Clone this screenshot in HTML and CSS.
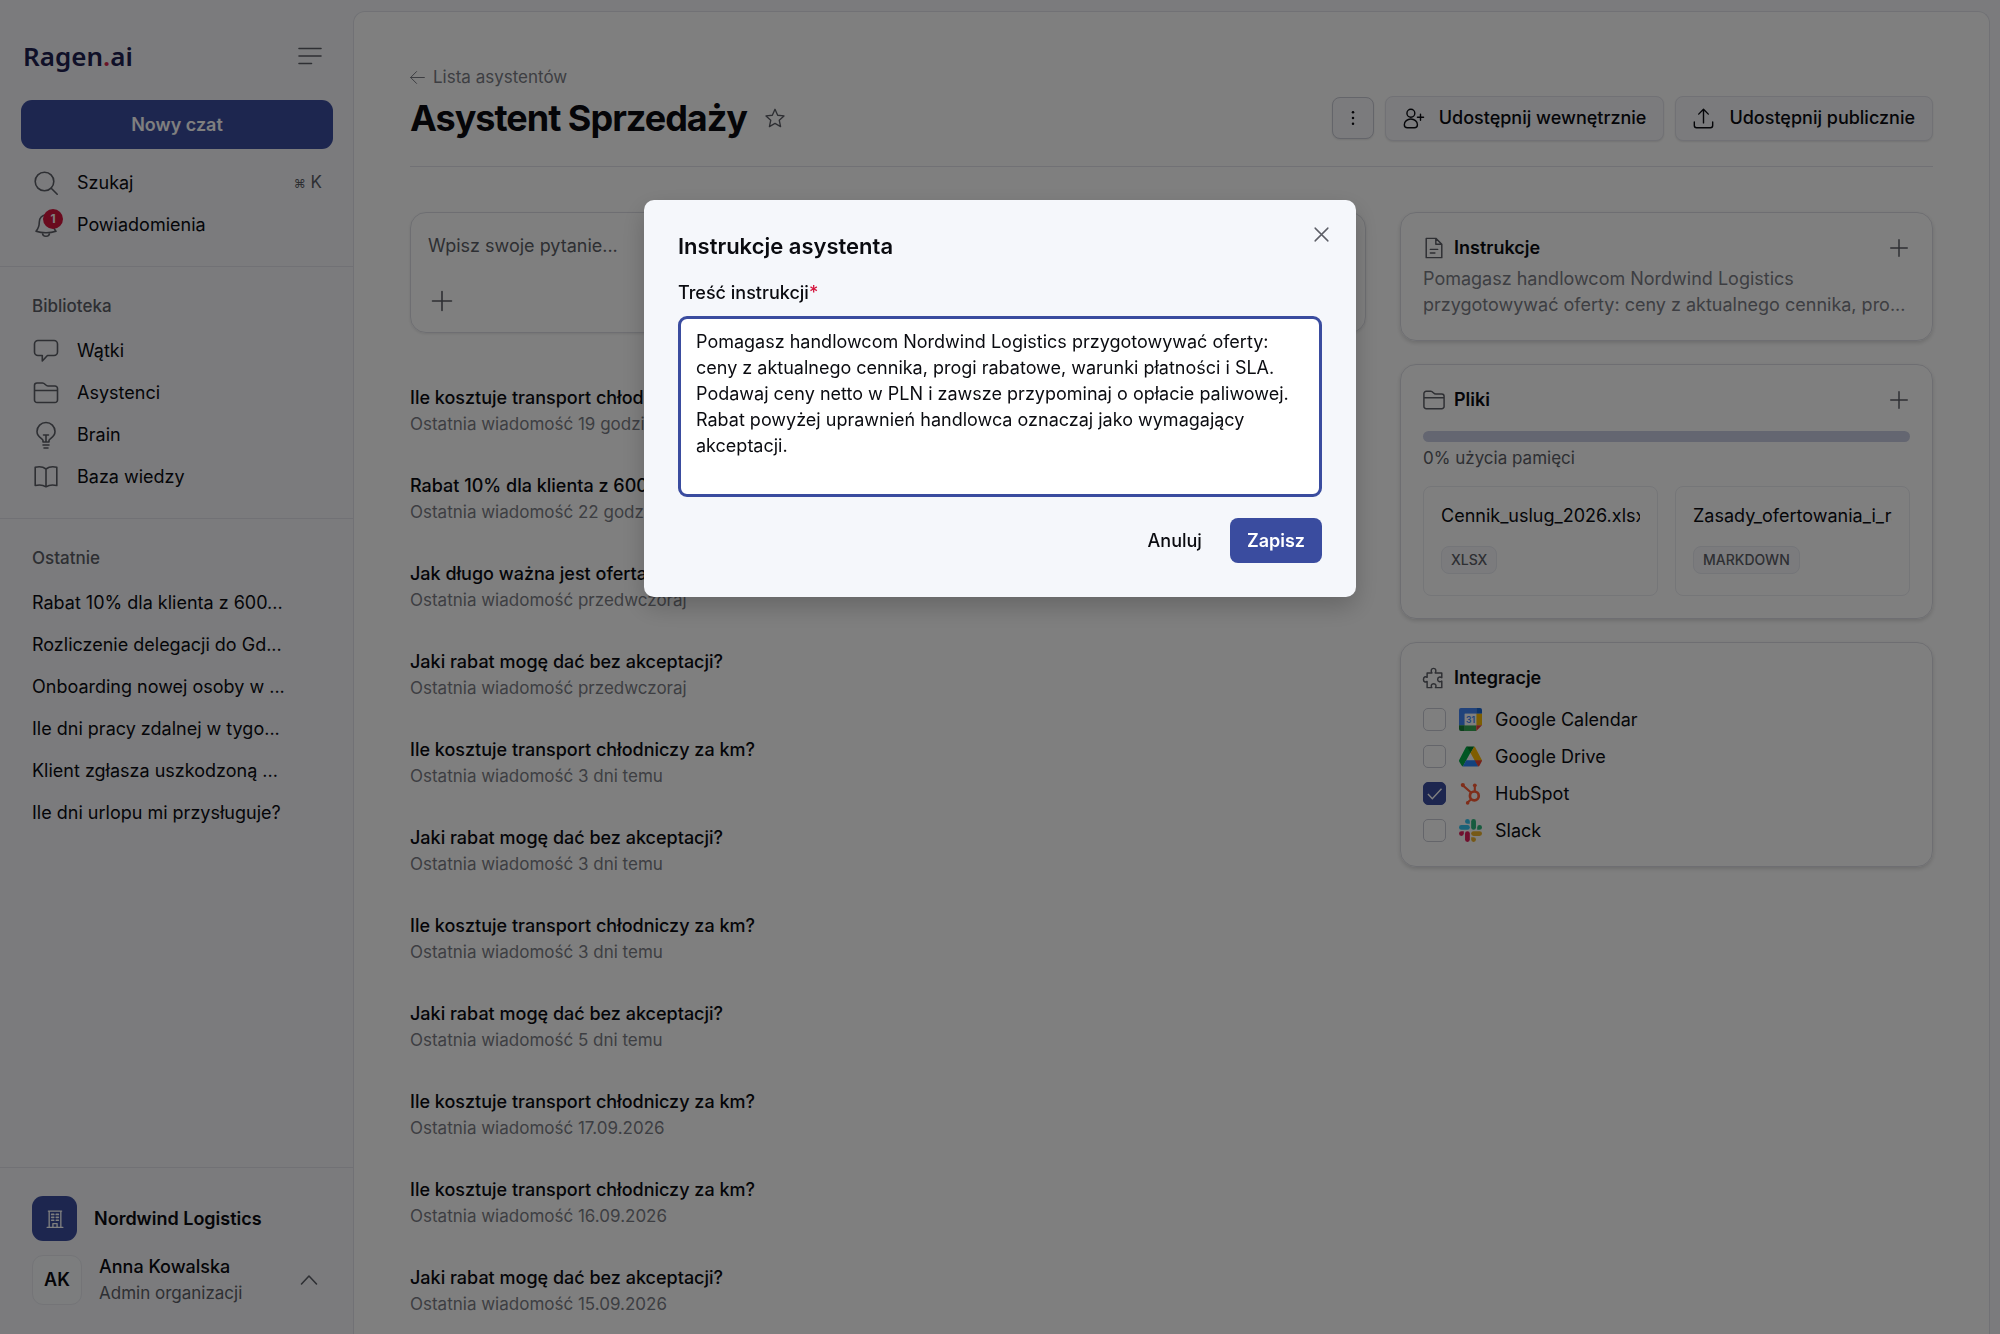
FILE: index.html
```html
<!DOCTYPE html>
<html lang="pl">
<head>
    <meta charset="UTF-8">
    <meta name="viewport" content="width=device-width, initial-scale=1.0">
    <title>Asystent Sprzedaży - Ragen.ai</title>
    <link rel="stylesheet" href="styles.css">
</head>
<body>
    <div class="app">
        <aside class="sidebar">
            <div class="sidebar-top">
                <a class="logo" href="#">Ragen<span>.</span>ai</a>
                <button class="icon-button" aria-label="Zwiń menu">
                    <svg class="icon" viewBox="0 0 24 24"><path d="M1 4.500h22M1 12h22M1 19.500h12.500"/></svg>
                </button>
            </div>
            <button class="new-chat">Nowy czat</button>
            <nav class="nav">
                <a href="#">
                    <svg class="icon" viewBox="0 0 24 24"><circle cx="10.500" cy="10.500" r="9.300"/><path d="M17.200 17.200l6 6"/></svg>
                    <span>Szukaj</span>
                    <kbd><small>⌘</small> K</kbd>
                </a>
                <a href="#">
                    <span class="bell">
                        <svg class="icon" viewBox="0 0 24 24"><path d="M12 2C8 2 5.300 5 5.300 9c0 5-1.300 7-3.300 9.200 3 1 6.500 1.500 10 1.500s7-.5 10-1.500c-2-2.200-3.300-4.200-3.300-9.200 0-4-2.700-7-6.700-7zM8.500 19.700c0 2.200 1.500 3.600 3.500 3.600s3.500-1.400 3.500-3.600"/></svg>
                        <span class="count">1</span>
                    </span>
                    <span>Powiadomienia</span>
                </a>
            </nav>

            <section class="group">
                <h2>Biblioteka</h2>
                <nav class="nav">
                    <a href="#">
                        <svg class="icon" viewBox="0 0 24 24"><path d="M4 1.500h16a3.500 3.500 0 0 1 3.500 3.500v8a3.500 3.500 0 0 1-3.500 3.500h-6.500C11.500 18.500 10 20.500 8.300 22v-5.500H4A3.500 3.500 0 0 1 .5 13V5A3.500 3.500 0 0 1 4 1.500z"/></svg>
                        <span>Wątki</span>
                    </a>
                    <a href="#">
                        <svg class="icon" viewBox="0 0 24 24"><path d="M.5 19V4.500a2.500 2.500 0 0 1 2.500-2.500h5.500c2.500 0 3 3 5.500 3h7a2.500 2.500 0 0 1 2.500 2.500V19a2.500 2.500 0 0 1-2.500 2.500H3A2.500 2.500 0 0 1 .5 19zM.5 9.500h23"/></svg>
                        <span>Asystenci</span>
                    </a>
                    <a href="#">
                        <svg class="icon" viewBox="0 0 24 24"><path d="M9 19v-1.500C9 15.500 3 14.500 3 8.500a9 9 0 0 1 18 0c0 6-6 7-6 9V19M9 22h6M10 25h4M12 19v-7M9.500 12h5M9 19h6"/></svg>
                        <span>Brain</span>
                    </a>
                    <a href="#">
                        <svg class="icon" viewBox="0 0 24 24"><path d="M12 4C9 1.700 5 1.300 1.200 2.300V20.500c4-1 7.800-.7 10.800 1.300 3-2 6.800-2.300 10.800-1.300V2.300C19 1.300 15 1.700 12 4zM12 4v17.500"/></svg>
                        <span>Baza wiedzy</span>
                    </a>
                </nav>
            </section>

            <section class="group recent">
                <h2>Ostatnie</h2>
                <nav class="nav">
                    <a href="#">Rabat 10% dla klienta z 600...</a>
                    <a href="#">Rozliczenie delegacji do Gd...</a>
                    <a href="#">Onboarding nowej osoby w ...</a>
                    <a href="#">Ile dni pracy zdalnej w tygo...</a>
                    <a href="#">Klient zgłasza uszkodzoną ...</a>
                    <a href="#">Ile dni urlopu mi przysługuje?</a>
                </nav>
            </section>

            <div class="account">
                <div class="org">
                    <span class="org-icon">
                        <svg class="icon" viewBox="0 0 24 24"><path d="M4 2.500h16M2.500 22h19M5 2.500V22M19 2.500V22M9.500 22v-4.500h5V22"/><path d="M8 6.500h2.500M13.500 6.500H16M8 10h2.500M13.500 10H16M8 13.500h2.500M13.500 13.500H16" stroke-width="2"/></svg>
                    </span>
                    <strong>Nordwind Logistics</strong>
                </div>
                <button class="user">
                    <span class="avatar">AK</span>
                    <span class="user-name">
                        <b>Anna Kowalska</b>
                        <span>Admin organizacji</span>
                    </span>
                    <svg class="icon" viewBox="0 0 24 24"><path d="M4.500 16l7.500-8 7.500 8"/></svg>
                </button>
            </div>
        </aside>

        <main class="main">
            <a class="back" href="#">
                <svg class="icon" viewBox="0 0 24 24"><path d="M1 12h22M10.500 2.500L1 12l9.500 9.500"/></svg>
                Lista asystentów
            </a>
            <header class="page-header">
                <h1>Asystent Sprzedaży</h1>
                <button class="icon-button star" aria-label="Dodaj do ulubionych">
                    <svg class="icon" viewBox="0 0 24 24"><path d="M12 1.500l3.200 7.200 7.600.8-5.700 5.200 1.600 7.600L12 18.500l-6.700 3.800 1.600-7.600L1.200 9.500l7.600-.8z"/></svg>
                </button>
                <div class="actions">
                    <button class="button more" aria-label="Więcej">
                        <svg class="icon dots" viewBox="0 0 24 24"><circle cx="12" cy="5" r="1.500"/><circle cx="12" cy="12" r="1.500"/><circle cx="12" cy="19" r="1.500"/></svg>
                    </button>
                    <button class="button">
                        <svg class="icon" viewBox="0 0 24 24"><circle cx="9" cy="6" r="4.500"/><path d="M9 12.500c-4 0-7.500 3-7.500 6.500 0 2 1.500 3.500 3.500 3.500h8c2 0 3.500-1.500 3.500-3.500 0-3.500-3.500-6.500-7.500-6.500zM20 7v7M16.500 10.500h7"/></svg>
                        Udostępnij wewnętrznie
                    </button>
                    <button class="button">
                        <svg class="icon" viewBox="0 0 24 24"><path d="M12 17V1.500M6.500 7L12 1.500 17.500 7M1.500 16v4a2.500 2.500 0 0 0 2.500 2.500h16a2.500 2.500 0 0 0 2.500-2.500v-4"/></svg>
                        Udostępnij publicznie
                    </button>
                </div>
            </header>

            <div class="columns">
                <div class="threads-column">
                    <div class="composer">
                        <input type="text" placeholder="Wpisz swoje pytanie..." aria-label="Pytanie">
                        <button class="icon-button" aria-label="Dodaj plik">
                            <svg class="icon" viewBox="0 0 24 24"><path d="M12 2.500v19M2.500 12h19"/></svg>
                        </button>
                    </div>
                    <ul class="threads">
                        <li><a href="#">Ile kosztuje transport chłodniczy za km?</a><span>Ostatnia wiadomość 19 godzin temu</span></li>
                        <li><a href="#">Rabat 10% dla klienta z 600 paletami</a><span>Ostatnia wiadomość 22 godziny temu</span></li>
                        <li><a href="#">Jak długo ważna jest oferta?</a><span>Ostatnia wiadomość przedwczoraj</span></li>
                        <li><a href="#">Jaki rabat mogę dać bez akceptacji?</a><span>Ostatnia wiadomość przedwczoraj</span></li>
                        <li><a href="#">Ile kosztuje transport chłodniczy za km?</a><span>Ostatnia wiadomość 3 dni temu</span></li>
                        <li><a href="#">Jaki rabat mogę dać bez akceptacji?</a><span>Ostatnia wiadomość 3 dni temu</span></li>
                        <li><a href="#">Ile kosztuje transport chłodniczy za km?</a><span>Ostatnia wiadomość 3 dni temu</span></li>
                        <li><a href="#">Jaki rabat mogę dać bez akceptacji?</a><span>Ostatnia wiadomość 5 dni temu</span></li>
                        <li><a href="#">Ile kosztuje transport chłodniczy za km?</a><span>Ostatnia wiadomość 17.09.2026</span></li>
                        <li><a href="#">Ile kosztuje transport chłodniczy za km?</a><span>Ostatnia wiadomość 16.09.2026</span></li>
                        <li><a href="#">Jaki rabat mogę dać bez akceptacji?</a><span>Ostatnia wiadomość 15.09.2026</span></li>
                    </ul>
                </div>

                <div class="panels">
                    <section class="card">
                        <div class="card-header">
                            <svg class="icon" viewBox="0 0 24 24"><path d="M3.500 1.500H14l6.500 6.500v14.500h-17zM14 1.500V8h6.500M8 13.500h8M8 17.500h5"/></svg>
                            <h3>Instrukcje</h3>
                            <button class="icon-button" aria-label="Edytuj instrukcje">
                                <svg class="icon" viewBox="0 0 24 24"><path d="M12 3v18M3 12h18"/></svg>
                            </button>
                        </div>
                        <p class="excerpt">Pomagasz handlowcom Nordwind Logistics przygotowywać oferty: ceny z aktualnego cennika, pro...</p>
                    </section>

                    <section class="card">
                        <div class="card-header">
                            <svg class="icon" viewBox="0 0 24 24"><path d="M1 19V5a2.500 2.500 0 0 1 2.500-2.500h5c2.500 0 3 3 5.500 3h6.500A2.500 2.500 0 0 1 23 8v11a2.500 2.500 0 0 1-2.500 2.500h-17A2.500 2.500 0 0 1 1 19zM1 9.500h22"/></svg>
                            <h3>Pliki</h3>
                            <button class="icon-button" aria-label="Dodaj plik">
                                <svg class="icon" viewBox="0 0 24 24"><path d="M12 3v18M3 12h18"/></svg>
                            </button>
                        </div>
                        <div class="usage-bar"></div>
                        <p class="usage">0% użycia pamięci</p>
                        <div class="files">
                            <div class="file">
                                <p>Cennik_uslug_2026.xlsx</p>
                                <span class="tag">XLSX</span>
                            </div>
                            <div class="file">
                                <p>Zasady_ofertowania_i_rabatow.md</p>
                                <span class="tag">MARKDOWN</span>
                            </div>
                        </div>
                    </section>

                    <section class="card">
                        <div class="card-header">
                            <svg class="icon" viewBox="0 0 24 24"><path d="M4.500 6.500h5.200c-1.300-2-1-5 1.800-5s3.100 3 1.800 5H20.500v5.200c-2-1.300-4.500-.8-4.500 1.800s2.500 3.100 4.500 1.800v7.200H13.600c1.200-2 .6-4.200-2-4.200s-3.200 2.200-2 4.200H4.500v-6.700c-2 1.200-4 .4-4-2.300s2-3.500 4-2.300z"/></svg>
                            <h3>Integracje</h3>
                        </div>
                        <div class="integrations">
                            <label>
                                <input type="checkbox">
                                <svg class="brand" viewBox="0 0 24 24">
                                    <path fill="#4285f4" d="M2 0h16v6H6v12H0V2a2 2 0 0 1 2-2z"/>
                                    <path fill="#1967d2" d="M18 0h4a2 2 0 0 1 2 2v4h-6z"/>
                                    <path fill="#fbbc04" d="M18 6h6v12h-6z"/>
                                    <path fill="#34a853" d="M6 18h12v6H6z"/>
                                    <path fill="#188038" d="M0 18h6v6H2a2 2 0 0 1-2-2z"/>
                                    <path fill="#ea4335" d="M18 18h6l-6 6z"/>
                                    <path fill="#fff" d="M6 6h12v12H6z"/>
                                    <text x="12" y="15.500" text-anchor="middle">31</text>
                                </svg>
                                Google Calendar
                            </label>
                            <label>
                                <input type="checkbox">
                                <svg class="brand" viewBox="0 0 24 24">
                                    <path fill="#00ac47" d="M8 1.500h.5L12 7.800 4 22.500a2 2 0 0 1-1.300-1L.3 17.500a2 2 0 0 1 0-2L7 2.500a2 2 0 0 1 1-1z"/>
                                    <path fill="#00832d" d="M8 1.500h8L12 8.500z"/>
                                    <path fill="#ffba00" d="M16 1.500a2 2 0 0 1 1 1l6.700 13a2 2 0 0 1 .3 1h-7.500L12 8.300z"/>
                                    <path fill="#2684fc" d="M7.500 16H17l3 6.300a2 2 0 0 1-1 .2H5a2 2 0 0 1-1-.2z"/>
                                    <path fill="#ea4335" d="M16.300 16H24a2 2 0 0 1-.3 1.200L21.500 21.500a2 2 0 0 1-1.500 1z"/>
                                </svg>
                                Google Drive
                            </label>
                            <label>
                                <input type="checkbox" checked>
                                <svg class="brand" viewBox="0 0 24 24">
                                    <g fill="none" stroke="#ff5c35" stroke-width="2.200"><circle cx="16" cy="14.500" r="4.600" stroke-width="2.800"/><path d="M4 3.500l8.500 7.500M16.500 4v6M12.700 18L9 21.500"/></g>
                                    <g fill="#ff5c35"><circle cx="4" cy="3.200" r="2.200"/><circle cx="16.500" cy="3.500" r="2"/><circle cx="9" cy="21.800" r="1.900"/></g>
                                </svg>
                                HubSpot
                            </label>
                            <label>
                                <input type="checkbox">
                                <svg class="brand" viewBox="0 0 24 24">
                                    <g fill="#36c5f0"><rect x="0" y="6.300" width="11.300" height="5" rx="2.500"/><path d="M11.300 5H8.800a2.500 2.500 0 1 1 2.500-2.500z"/></g>
                                    <g fill="#2eb67d"><rect x="12.700" y="0" width="5" height="11.300" rx="2.500"/><path d="M19 11.300V8.800a2.500 2.500 0 1 1 2.500 2.500z"/></g>
                                    <g fill="#ecb22e"><rect x="12.700" y="12.700" width="11.300" height="5" rx="2.500"/><path d="M12.700 19h2.500a2.500 2.500 0 1 1-2.500 2.500z"/></g>
                                    <g fill="#e01e5a"><rect x="6.300" y="12.700" width="5" height="11.300" rx="2.500"/><path d="M5 12.700v2.500a2.500 2.500 0 1 1-2.500-2.500z"/></g>
                                </svg>
                                Slack
                            </label>
                        </div>
                    </section>
                </div>
            </div>
        </main>
    </div>

    <!-- Dialog -->
    <div class="overlay">
        <form class="modal" role="dialog" aria-labelledby="modal-title">
            <button type="button" class="icon-button close" aria-label="Zamknij">
                <svg class="icon" viewBox="0 0 24 24"><path d="M3 3l18 18M21 3L3 21"/></svg>
            </button>
            <h2 id="modal-title">Instrukcje asystenta</h2>
            <label for="instructions">Treść instrukcji<span>*</span></label>
            <textarea id="instructions" spellcheck="false">Pomagasz handlowcom Nordwind Logistics przygotowywać oferty: ceny z aktualnego cennika, progi rabatowe, warunki płatności i SLA. Podawaj ceny netto w PLN i zawsze przypominaj o opłacie paliwowej. Rabat powyżej uprawnień handlowca oznaczaj jako wymagający akceptacji.</textarea>
            <div class="modal-actions">
                <button type="button" class="cancel">Anuluj</button>
                <button type="button" class="save">Zapisz</button>
            </div>
        </form>
    </div>
</body>
</html>
```
FILE: styles.css
```css
* {
    box-sizing: border-box;
}
body {
    margin: 0;
    background-color: #f6f7fb;
    color: #0a0b10;
    font-family: Inter, sans-serif;
    font-size: 18px;
    line-height: 26px;
}
h1, h2, h3, p, ul {
    margin: 0;
    padding: 0;
}
a {
    color: inherit;
    text-decoration: none;
}
button, input, textarea {
    font: inherit;
    color: inherit;
}
button {
    border: none;
    background: none;
    padding: 0;
    cursor: pointer;
}
.icon {
    width: 24px;
    height: 24px;
    flex: none;
    fill: none;
    stroke: currentColor;
    stroke-width: 1.6;
    stroke-linecap: round;
    stroke-linejoin: round;
    overflow: visible;
}
.icon-button {
    display: flex;
    color: #5c5e66;
}
.app {
    display: flex;
    height: 100vh;
    overflow: hidden;
}

/* Sidebar */
.sidebar {
    width: 353px;
    flex: none;
    display: flex;
    flex-direction: column;
}
.sidebar-top {
    display: flex;
    align-items: center;
    justify-content: space-between;
    padding: 38px 31px 26px 23px;
}
.logo {
    font-family: "Noto Sans", sans-serif;
    font-size: 26px;
    line-height: 36px;
    font-weight: 600;
    color: #1e2150;
}
.logo span {
    color: #d8274e;
}
.new-chat {
    height: 49px;
    margin: 0 20px 13px 21px;
    border-radius: 11px;
    background-color: #3a4c9f;
    color: #fff;
    font-weight: 600;
}
.nav {
    display: flex;
    flex-direction: column;
}
.nav a {
    display: flex;
    align-items: center;
    gap: 19px;
    height: 42px;
    padding: 0 31px 0 34px;
}
.nav .icon {
    color: #5c5e66;
}
.nav kbd {
    margin-left: auto;
    font-family: inherit;
    font-size: 17px;
    color: #5c5e66;
}
.nav small {
    font-size: 12px;
}
.bell {
    position: relative;
    display: flex;
}
.count {
    position: absolute;
    top: -4px;
    right: -5px;
    width: 20px;
    height: 20px;
    border-radius: 50%;
    background-color: #d4143c;
    color: #fff;
    font-size: 12px;
    line-height: 20px;
    font-weight: 700;
    text-align: center;
}
.group {
    margin-top: 20px;
    padding-top: 25px;
    border-top: 1px solid #e2e3ea;
}
.group h2 {
    padding: 0 32px 10px;
    font-size: 17px;
    line-height: 28px;
    font-weight: 500;
    color: #5c5e66;
}
.recent .nav a {
    padding: 0 32px;
}
.account {
    margin-top: auto;
    padding: 28px 32px;
    border-top: 1px solid #e2e3ea;
}
.org {
    display: flex;
    align-items: center;
    gap: 17px;
    margin-bottom: 13px;
}
.org strong {
    font-weight: 600;
}
.org-icon {
    display: flex;
    align-items: center;
    justify-content: center;
    width: 45px;
    height: 45px;
    border-radius: 11px;
    background-color: #3a4c9f;
    color: #fff;
}
.org-icon .icon {
    width: 20px;
    height: 20px;
}
.user {
    display: flex;
    align-items: center;
    gap: 17px;
    width: 100%;
    text-align: left;
}
.user .icon {
    margin-left: auto;
    color: #5c5e66;
}
.user-name {
    display: flex;
    flex-direction: column;
}
.user-name span {
    font-size: 17px;
    color: #5c5e66;
}
.user b {
    font-weight: 500;
}
.avatar {
    width: 50px;
    height: 50px;
    border: 1px solid #e8e9ef;
    border-radius: 11px;
    background-color: #f9fafc;
    line-height: 48px;
    font-weight: 600;
    text-align: center;
}

/* Main area */
.main {
    flex: 1;
    min-width: 0;
    margin: 11px 10px 0 0;
    padding: 52px 56px 0;
    border: 1px solid #e2e3ea;
    border-bottom: none;
    border-radius: 12px 12px 0 0;
    background-color: #fff;
}
.back {
    display: inline-flex;
    align-items: center;
    gap: 8px;
    font-size: 17px;
    color: #7b7d85;
}
.back .icon {
    width: 15px;
    height: 15px;
}
.page-header {
    display: flex;
    align-items: center;
    padding-bottom: 21px;
    border-bottom: 1px solid #e2e3ea;
}
.page-header h1 {
    font-size: 36px;
    line-height: 53px;
    font-weight: 700;
    letter-spacing: -1px;
}
.star {
    margin-left: 18px;
}
.star .icon {
    width: 20px;
    height: 20px;
}
.actions {
    display: flex;
    align-items: center;
    gap: 11px;
    margin-left: auto;
}
.button {
    display: flex;
    align-items: center;
    gap: 15px;
    height: 45px;
    padding: 0 17px;
    border: 1px solid #e2e3ea;
    border-radius: 8px;
    background-color: #f6f7fb;
    box-shadow: 0 1px 2px #0000001a;
    font-weight: 500;
}
.button .icon {
    width: 21px;
    height: 21px;
}
.button.more {
    height: 42px;
    padding: 0 10px;
    border-color: #c8cad4;
}
.button .dots {
    width: 20px;
    height: 20px;
    fill: currentColor;
    stroke: none;
}
.columns {
    display: grid;
    grid-template-columns: minmax(0, 956fr) minmax(0, 533fr);
    gap: 34px;
    padding-top: 45px;
}
.composer {
    padding: 20px 17px 19px;
    border: 1px solid #dcdde4;
    border-radius: 16px;
    box-shadow: 0 1px 3px #0000001a;
}
.composer input {
    display: block;
    width: 100%;
    margin-bottom: 30px;
    padding: 0;
    border: none;
    background: none;
    outline: none;
}
.composer input::placeholder {
    color: #5c5e66;
    opacity: 1;
}
.composer .icon-button {
    padding-left: 2px;
}
.threads {
    padding-top: 52px;
    list-style: none;
}
.threads li {
    display: flex;
    flex-direction: column;
    padding-bottom: 36px;
}
.threads a {
    font-weight: 500;
}
.threads span {
    font-size: 17px;
    color: #7b7d85;
}
.panels {
    display: flex;
    flex-direction: column;
    gap: 23px;
}
.card {
    padding: 22px;
    border: 1px solid #dcdde4;
    border-radius: 16px;
    box-shadow: 0 2px 4px #00000026;
}
.card-header {
    display: flex;
    align-items: center;
    gap: 9px;
}
.card-header .icon {
    width: 22px;
    height: 22px;
    color: #5c5e66;
}
.card-header h3 {
    font-size: 18px;
    font-weight: 600;
}
.card-header .icon-button {
    margin-left: auto;
}
.excerpt {
    margin-top: 5px;
    color: #7b7d85;
}
.usage-bar {
    height: 11px;
    margin-top: 18px;
    border-radius: 6px;
    background-color: #c9cde2;
}
.usage {
    margin: 3px 0 15px;
    font-size: 17px;
    color: #5c5e66;
}
.files {
    display: grid;
    grid-template-columns: minmax(0, 1fr) minmax(0, 1fr);
    gap: 17px;
}
.file {
    height: 110px;
    padding: 16px 17px;
    border: 1px solid #ebecf1;
    border-radius: 8px;
}
.file p {
    overflow: hidden;
    white-space: nowrap;
}
.tag {
    display: inline-block;
    margin-top: 17px;
    padding: 0 9px;
    border: 1px solid #e8eaf1;
    border-radius: 8px;
    background-color: #f6f7fb;
    font-size: 14px;
    font-weight: 500;
    color: #5c5e66;
}
.integrations {
    display: flex;
    flex-direction: column;
    gap: 11px;
    padding-top: 16px;
}
.integrations label {
    display: flex;
    align-items: center;
    gap: 13px;
}
.integrations input {
    appearance: none;
    width: 23px;
    height: 23px;
    margin: 0;
    border: 1px solid #c8cad4;
    border-radius: 5px;
}
.integrations input:checked {
    border-color: #3a4c9f;
    background: #3a4c9f url("data:image/svg+xml,%3Csvg xmlns='http://www.w3.org/2000/svg' viewBox='0 0 24 24' fill='none' stroke='white' stroke-width='1.6'%3E%3Cpath d='M4.5 12.5l5 5.5L20 6.5'/%3E%3C/svg%3E");
}
.brand {
    width: 23px;
    height: 23px;
}
.brand text {
    font-size: 9px;
    font-weight: 600;
    fill: #4285f4;
}

/* Dialog */
.overlay {
    position: fixed;
    inset: 0;
    display: flex;
    align-items: flex-start;
    justify-content: center;
    padding-top: 15vh;
    background-color: rgba(0, 0, 0, 0.5);
}
.modal {
    position: relative;
    display: flex;
    flex-direction: column;
    width: 712px;
    max-width: 100%;
    padding: 32px 34px 34px;
    border-radius: 10px;
    background-color: #f5f7fb;
    box-shadow: 0 10px 24px rgba(0, 0, 0, 0.2);
}
.modal h2 {
    font-size: 22px;
    line-height: 28px;
    font-weight: 600;
}
.modal label {
    padding: 20px 0 10px;
    font-weight: 500;
}
.modal label span {
    color: #d4143c;
}
.modal textarea {
    height: 181px;
    padding: 10px 15px;
    border: 3px solid #3a4c9f;
    border-radius: 9px;
    background-color: #fff;
    outline: none;
    resize: none;
}
.close {
    position: absolute;
    top: 26px;
    right: 26px;
}
.close .icon {
    width: 17px;
    height: 17px;
    stroke-width: 2;
}
.modal-actions {
    display: flex;
    justify-content: flex-end;
    gap: 11px;
    margin-top: 21px;
}
.modal-actions button {
    height: 45px;
    padding: 0 17px;
    border-radius: 8px;
    font-weight: 500;
}
.modal-actions .save {
    background-color: #3a4c9f;
    color: #fff;
    font-weight: 600;
}
```
